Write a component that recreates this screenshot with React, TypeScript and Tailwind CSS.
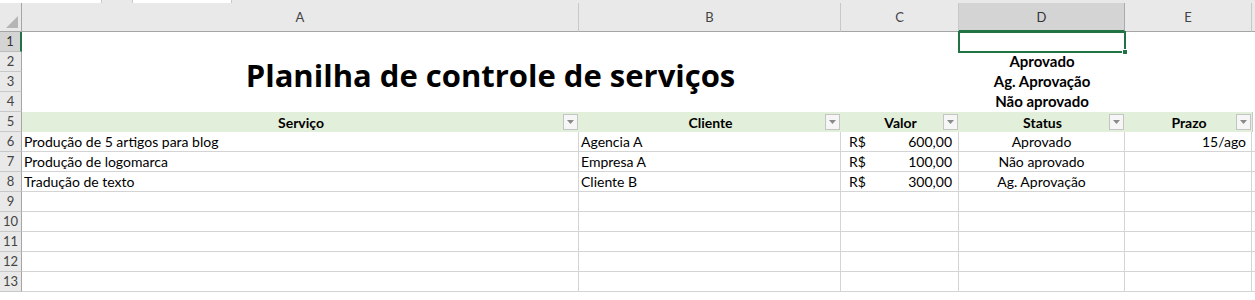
import React from "react";

const cols = ["A", "B", "C", "D", "E"];

const rows = [
  { n: 6, a: "Produção de 5 artigos para blog", b: "Agencia A", c: "600,00", d: "Aprovado", e: "15/ago" },
  { n: 7, a: "Produção de logomarca", b: "Empresa A", c: "100,00", d: "Não aprovado", e: "" },
  { n: 8, a: "Tradução de texto", b: "Cliente B", c: "300,00", d: "Ag. Aprovação", e: "" },
];

function FilterButton() {
  return (
    <span className="ml-auto mr-[1px] flex h-[16px] w-[15px] shrink-0 items-center justify-center border border-[#c4c4c4] bg-[#f6f6f6]">
      <svg width="7" height="4" viewBox="0 0 7 4">
        <path d="M0 0 L7 0 L3.5 4 Z" fill="#8a8a8a" />
      </svg>
    </span>
  );
}

function RowHead({ n, selected }: { n: number; selected?: boolean }) {
  return (
    <div
      className={
        selected
          ? "flex items-center justify-center border-b border-r-2 border-b-[#bdbdbd] border-r-[#217346] bg-[#d4d4d4] text-[13px] text-[#333]"
          : "flex items-center justify-center border-b border-r border-b-[#c8c8c8] border-r-[#a5a5a5] bg-[#e9e9e9] text-[13px] text-[#444]"
      }
    >
      {n}
    </div>
  );
}

function HeaderCell({ label }: { label: string }) {
  return (
    <div className="flex items-center bg-[#e2efda] pl-[17px] text-[14px] font-bold text-black">
      <span className="flex-1 text-center">{label}</span>
      <FilterButton />
    </div>
  );
}

const cell = "flex items-center border-b border-r border-[#d4d4d4] px-[2px] text-[14px] text-black";

export default function App() {
  return (
    <div className="h-[300px] w-[1255px] overflow-hidden bg-white font-['Lato',sans-serif]">
      {/* tab strip remains */}
      <div className="flex h-[3px] bg-[#e9e9e9]">
        <div className="w-[102px] border-r border-[#c8c8c8] bg-white" />
        <div className="ml-[30px] w-[100px] border-x border-[#c8c8c8] bg-white" />
      </div>

      <div className="grid grid-cols-[22px_557px_262px_118px_166px_127px_1fr] grid-rows-[29px_repeat(13,20px)]">
        {/* column headers */}
        <div className="relative border-b border-r border-[#a5a5a5] bg-[#e9e9e9]">
          <svg className="absolute bottom-[3px] right-[3px]" width="12" height="12" viewBox="0 0 12 12">
            <path d="M12 0 L12 12 L0 12 Z" fill="#b5b5b5" />
          </svg>
        </div>
        {cols.map((c) =>
          c === "D" ? (
            <div
              key={c}
              className="flex items-center justify-center border-b-2 border-r border-b-[#217346] border-r-[#ababab] bg-[#d4d4d4] pt-[2px] text-[13px] text-[#333]"
            >
              {c}
            </div>
          ) : (
            <div
              key={c}
              className="flex items-center justify-center border-b border-r border-b-[#a5a5a5] border-r-[#c8c8c8] bg-[#e9e9e9] pt-[2px] text-[13px] text-[#444]"
            >
              {c}
            </div>
          )
        )}
        <div className="border-b border-[#a5a5a5] bg-[#e9e9e9]" />

        {/* row 1 */}
        <RowHead n={1} selected />
        <div className="col-span-3" />
        <div className="relative">
          <div className="absolute -left-[1px] -top-[1px] bottom-[-1px] right-[-1px] border-2 border-[#217346]" />
          <div className="absolute -bottom-[3px] -right-[3px] h-[6px] w-[6px] border border-white bg-[#217346]" />
        </div>
        <div />
        <div />

        {/* rows 2-4 */}
        <RowHead n={2} />
        <div className="col-span-3 row-span-3 flex items-center justify-center pb-[14px] font-['Open_Sans',sans-serif] text-[31px] font-bold text-black">
          Planilha de controle de serviços
        </div>
        <div className="flex items-end justify-center text-[15px] font-bold">Aprovado</div>
        <div />
        <div />
        <RowHead n={3} />
        <div className="flex items-end justify-center text-[15px] font-bold">Ag. Aprovação</div>
        <div />
        <div />
        <RowHead n={4} />
        <div className="flex items-end justify-center text-[15px] font-bold">Não aprovado</div>
        <div />
        <div />

        {/* row 5: table header */}
        <RowHead n={5} />
        <HeaderCell label="Serviço" />
        <HeaderCell label="Cliente" />
        <HeaderCell label="Valor" />
        <HeaderCell label="Status" />
        <HeaderCell label="Prazo" />
        <div className="border-l border-[#c8c8c8]" />

        {/* data rows */}
        {rows.map((r) => (
          <React.Fragment key={r.n}>
            <RowHead n={r.n} />
            <div className={cell}>{r.a}</div>
            <div className={cell}>{r.b}</div>
            <div className={cell + " justify-between pl-[8px] pr-[6px]"}>
              <span>R$</span>
              <span>{r.c}</span>
            </div>
            <div className={cell + " justify-center"}>{r.d}</div>
            <div className={cell + " justify-end pr-[5px]"}>{r.e}</div>
            <div className="border-b border-[#d4d4d4]" />
          </React.Fragment>
        ))}

        {/* empty rows */}
        {[9, 10, 11, 12, 13].map((n) => (
          <React.Fragment key={n}>
            <RowHead n={n} />
            <div className={cell} />
            <div className={cell} />
            <div className={cell} />
            <div className={cell} />
            <div className={cell} />
            <div className="border-b border-[#d4d4d4]" />
          </React.Fragment>
        ))}
      </div>
    </div>
  );
}
